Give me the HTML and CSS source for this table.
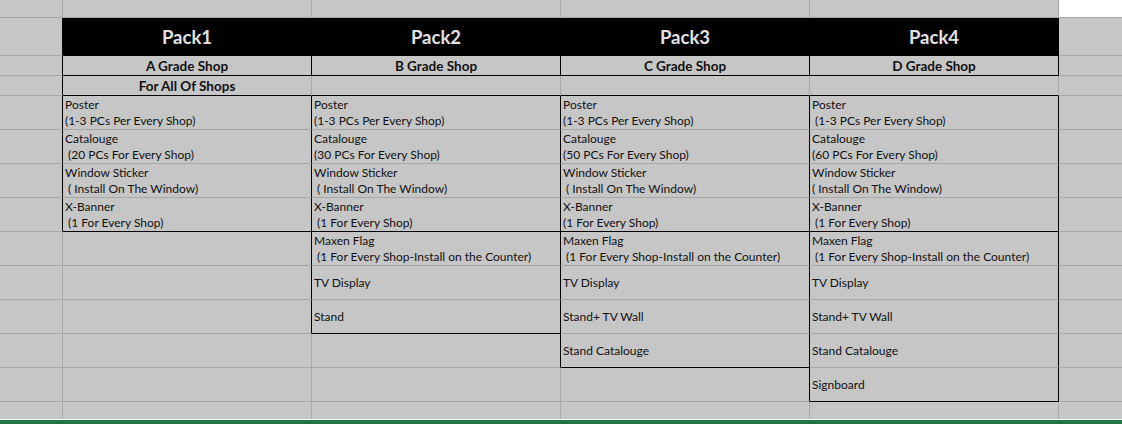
FILE: index.html
```html
<!DOCTYPE html>
<html lang="en">
<head>
<meta charset="utf-8">
<title>Packs</title>
<link rel="stylesheet" href="styles.css">
</head>
<body>
<div class="sheet">
  <div class="row">
    <div class="c"></div><div class="c"></div><div class="c"></div><div class="c"></div><div class="c"></div><div class="c white"></div>
  </div>
  <div class="row">
    <div class="c br"></div>
    <div class="c hd">Pack1</div><div class="c hd">Pack2</div><div class="c hd">Pack3</div><div class="c hd">Pack4</div>
    <div class="c"></div>
  </div>
  <div class="row">
    <div class="c br"></div>
    <div class="c br bb grade">A Grade Shop</div>
    <div class="c br bb grade">B Grade Shop</div>
    <div class="c br bb grade">C Grade Shop</div>
    <div class="c br bb grade">D Grade Shop</div>
    <div class="c"></div>
  </div>
  <div class="row">
    <div class="c br"></div>
    <div class="c bb grade">For All Of Shops</div>
    <div class="c bb"></div><div class="c bb"></div><div class="c bb"></div>
    <div class="c"></div>
  </div>

  <div class="row">
    <div class="c br"></div>
    <div class="c br item"><p>Poster</p><p>(1-3 PCs Per Every Shop)</p></div>
    <div class="c br item"><p>Poster</p><p>(1-3 PCs Per Every Shop)</p></div>
    <div class="c br item"><p>Poster</p><p>(1-3 PCs Per Every Shop)</p></div>
    <div class="c br item"><p>Poster</p><p> (1-3 PCs Per Every Shop)</p></div>
    <div class="c"></div>
  </div>
  <div class="row">
    <div class="c br"></div>
    <div class="c br item"><p>Catalouge</p><p> (20 PCs For Every Shop)</p></div>
    <div class="c br item"><p>Catalouge</p><p>(30 PCs For Every Shop)</p></div>
    <div class="c br item"><p>Catalouge</p><p>(50 PCs For Every Shop)</p></div>
    <div class="c br item"><p>Catalouge</p><p>(60 PCs For Every Shop)</p></div>
    <div class="c"></div>
  </div>
  <div class="row">
    <div class="c br"></div>
    <div class="c br item"><p>Window Sticker</p><p> ( Install On The Window)</p></div>
    <div class="c br item"><p>Window Sticker</p><p> ( Install On The Window)</p></div>
    <div class="c br item"><p>Window Sticker</p><p> ( Install On The Window)</p></div>
    <div class="c br item"><p>Window Sticker</p><p>( Install On The Window)</p></div>
    <div class="c"></div>
  </div>
  <div class="row">
    <div class="c br"></div>
    <div class="c br bb item"><p>X-Banner</p><p> (1 For Every Shop)</p></div>
    <div class="c br bb item"><p>X-Banner</p><p> (1 For Every Shop)</p></div>
    <div class="c br bb item"><p>X-Banner</p><p>(1 For Every Shop)</p></div>
    <div class="c br bb item"><p>X-Banner</p><p> (1 For Every Shop)</p></div>
    <div class="c"></div>
  </div>

  <div class="row">
    <div class="c"></div>
    <div class="c br"></div>
    <div class="c br item"><p>Maxen Flag</p><p> (1 For Every Shop-Install on the Counter)</p></div>
    <div class="c br item"><p>Maxen Flag</p><p> (1 For Every Shop-Install on the Counter)</p></div>
    <div class="c br item"><p>Maxen Flag</p><p> (1 For Every Shop-Install on the Counter)</p></div>
    <div class="c"></div>
  </div>
  <div class="row">
    <div class="c"></div>
    <div class="c br"></div>
    <div class="c br item"><p>TV Display</p></div>
    <div class="c br item"><p>TV Display</p></div>
    <div class="c br item"><p>TV Display</p></div>
    <div class="c"></div>
  </div>
  <div class="row">
    <div class="c"></div>
    <div class="c br"></div>
    <div class="c br bb item"><p>Stand</p></div>
    <div class="c br item"><p>Stand+ TV Wall</p></div>
    <div class="c br item"><p>Stand+ TV Wall</p></div>
    <div class="c"></div>
  </div>
  <div class="row">
    <div class="c"></div>
    <div class="c"></div>
    <div class="c br"></div>
    <div class="c br bb item"><p>Stand Catalouge</p></div>
    <div class="c br item"><p>Stand Catalouge</p></div>
    <div class="c"></div>
  </div>
  <div class="row">
    <div class="c"></div>
    <div class="c"></div>
    <div class="c"></div>
    <div class="c br"></div>
    <div class="c br bb item"><p>Signboard</p></div>
    <div class="c"></div>
  </div>
  <div class="row">
    <div class="c end"></div><div class="c end"></div><div class="c end"></div><div class="c end"></div><div class="c end"></div><div class="c end"></div>
  </div>
</div>
<div class="statusline"></div>
</body>
</html>
```

FILE: styles.css
```css
* { box-sizing: border-box; }

html, body {
  margin: 0;
  padding: 0;
  background: #c6c6c6;
}

body {
  width: 1122px;
  height: 424px;
  overflow: hidden;
  font-family: Lato, "Liberation Sans", sans-serif;
  color: #111111;
}

.sheet {
  display: grid;
  grid-template-columns: 63px 249px 249px 249px 249px 1fr;
  grid-template-rows: 18px 38px 20px 20px repeat(9, 34px) 17px;
}

.row { display: contents; }

.c {
  background: #c6c6c6;
  border-right: 1px solid #a8a8a8;
  border-bottom: 1px solid #a8a8a8;
  min-width: 0;
}

.c:last-child { border-right: none; }

.white { background: #ffffff; }

.br { border-right-color: #000; }
.bb { border-bottom-color: #000; }

.end { border-bottom: none; }

.hd {
  background: #000;
  border-right-color: #000;
  border-bottom-color: #000;
  color: #e2e2e2;
  font-weight: 700;
  font-size: 18.5px;
  display: flex;
  align-items: center;
  justify-content: center;
}

.grade {
  font-weight: 700;
  font-size: 13.5px;
  display: flex;
  align-items: center;
  justify-content: center;
  color: #111111;
}

.item {
  display: flex;
  flex-direction: column;
  justify-content: center;
  padding-left: 2px;
  font-size: 12px;
  line-height: 16px;
}

.item p {
  margin: 0;
  white-space: pre;
}

.statusline {
  height: 5px;
  border-top: 1px solid #ffffff;
  background: #217346;
}
```
